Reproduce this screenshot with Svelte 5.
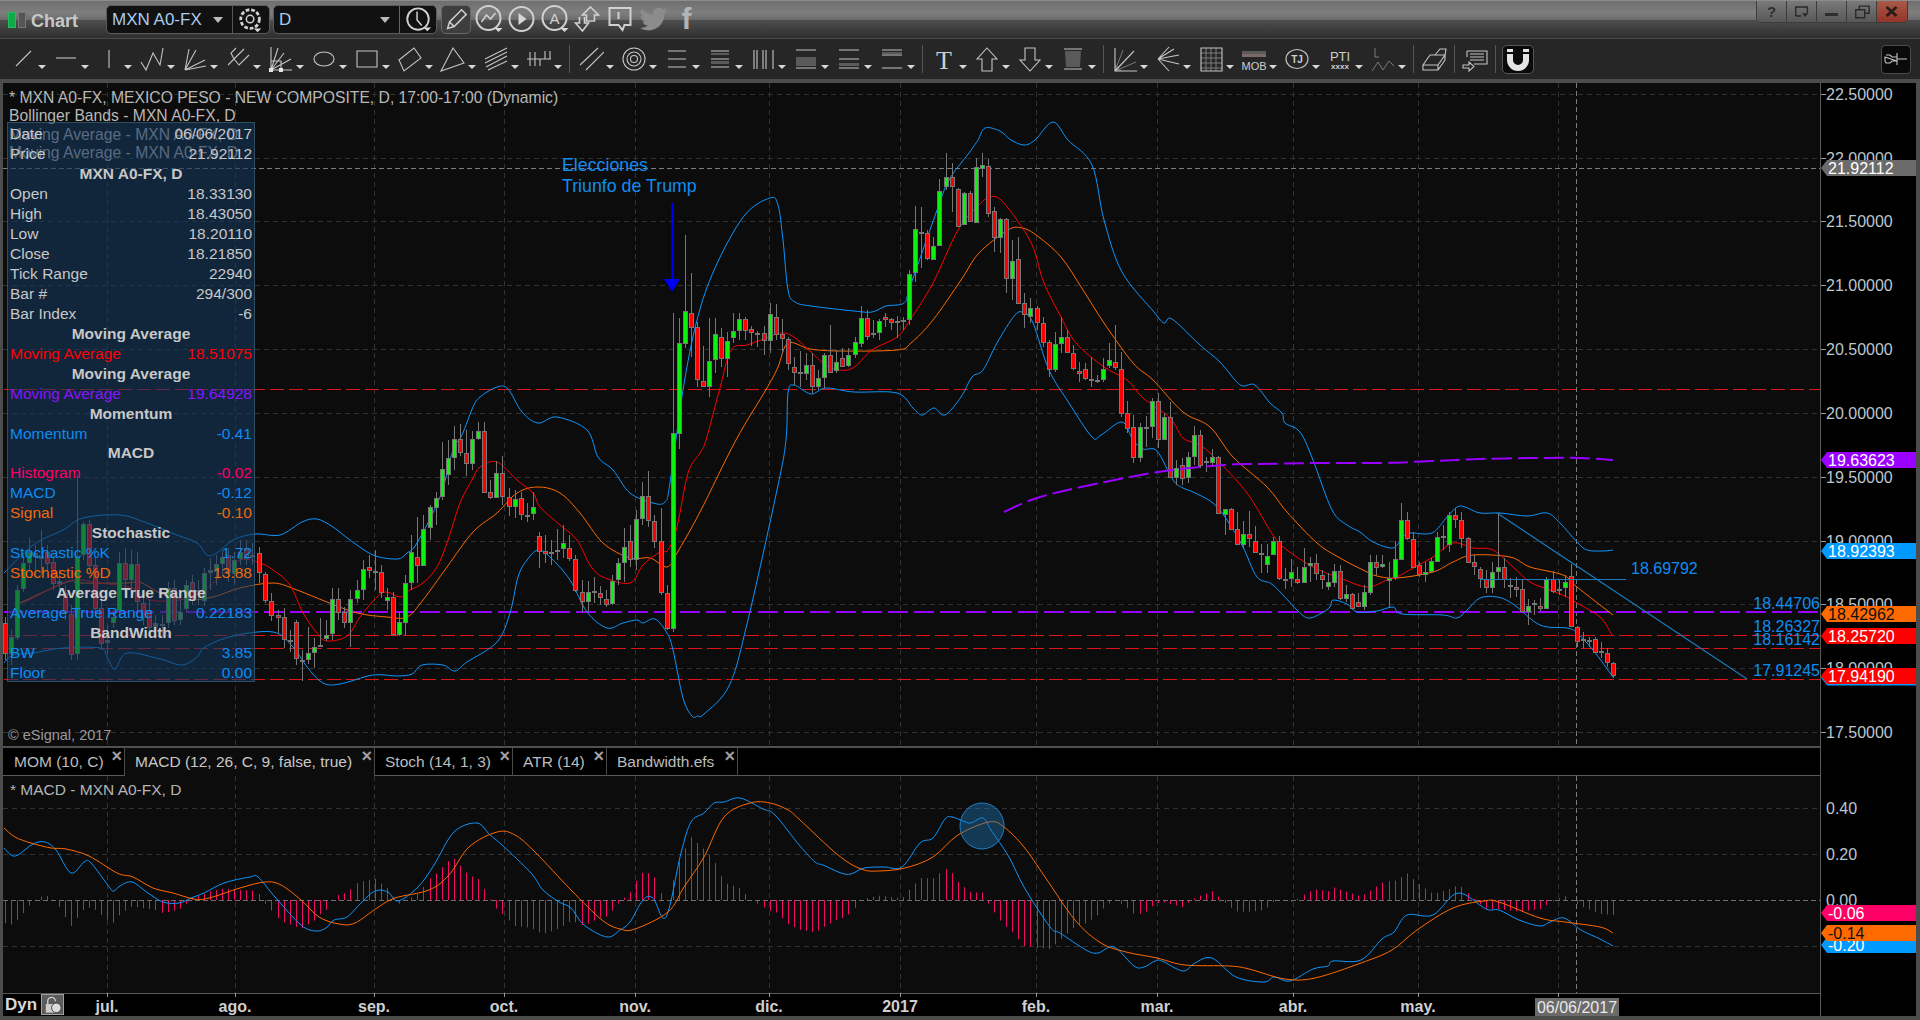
<script>
  // candle data, page pixels: kind + high,top,bottom,low. g = up, r = down, d = doji
  const segments = [
    { x0: 4.7, x1: 252, bars: 'r617,623,653,660 g630,637,653,665 g585,590,637,640 g553,563,588,592 g538,552,562,570 d545,553,556,570 d530,556,558,575 r545,552,563,570 r555,562,583,590 d570,581,583,595 r585,593,612,620 r605,614,654,660 g475,557,653,660 g522,524,554,560 r520,524,565,570 r558,565,608,612 r600,608,643,650 d625,640,642,654 g610,617,622,628 g552,563,610,615 r548,563,579,590 g550,564,579,590 r552,564,601,610 r595,603,617,625 r600,610,627,632 d615,623,626,635 d615,624,625,636 g582,588,622,628 r580,588,620,625 g600,612,619,625 g580,585,608,612 r575,582,600,605 d580,590,591,605 g568,573,600,606 d558,570,572,590 g555,564,571,585 g550,557,563,575 r548,555,572,582 g552,560,573,585 g540,552,558,565 r540,548,558,565 d543,555,556,565' },
    { x0: 259.3, x1: 672.7, bars: 'r547,553,572,583 r572,574,600,603 r593,601,615,621 r610,615,617,633 r608,617,639,648 d630,640,641,652 r620,622,658,665 d650,660,661,681 g627,653,659,664 g638,647,652,668 d618,645,646,647 g620,635,638,641 g588,599,633,640 r588,599,612,620 r607,612,622,628 g590,599,622,647 g580,590,598,603 g560,569,589,600 r555,567,570,578 d550,571,572,590 r565,572,592,598 g588,597,600,610 r592,597,634,635 g612,622,634,636 g575,583,622,635 g535,552,582,590 r517,557,565,583 g515,529,565,565 g505,507,527,540 g492,498,507,525 g442,469,496,500 g440,458,474,485 g426,439,457,470 r424,439,452,456 r430,453,463,476 g431,439,463,470 g422,431,438,440 r422,431,492,493 r480,492,497,499 g461,473,497,498 r456,473,496,505 r488,497,506,516 g490,499,506,518 r492,498,514,520 d503,515,516,522 g492,507,513,520 r532,536,551,568 r535,551,553,563 d540,552,553,565 d529,550,551,560 g525,543,548,558 r535,548,558,561 r555,559,590,592 r580,592,601,612 g581,592,601,612 d577,591,592,603 r586,593,597,605 r590,599,604,607 g575,581,603,605 g558,563,579,585 g528,547,562,582 r525,541,559,567 g510,519,559,570 g482,496,518,525 r471,496,520,527 r515,521,541,548 r508,541,592,595 r585,593,628,630 g313,433,628,632' },
    { x0: 678.6, x1: 1115.4, bars: 'g318,343,433,449 g235,311,343,348 r273,313,327,357 r322,327,379,387 r346,381,386,387 g318,361,386,397 g318,334,359,373 r328,337,358,367 g332,341,358,377 g313,331,337,343 g313,319,330,340 r317,319,330,340 r326,329,332,346 d331,333,334,347 r326,333,340,355 g303,314,340,353 r304,317,334,340 r319,334,338,353 r337,339,363,370 r357,367,372,385 d351,372,373,387 g353,365,373,380 r353,365,386,393 g370,378,386,390 g353,355,377,388 r325,355,372,373 g350,362,370,373 r348,358,366,367 g348,355,365,367 g337,342,354,358 g306,318,343,347 r310,318,336,340 d320,333,334,338 g319,321,332,340 r313,317,319,327 r318,319,322,330 d316,321,322,338 d317,320,321,330 g270,274,319,325 g206,229,272,282 d207,232,233,268 r230,233,258,260 g237,246,259,260 g179,191,245,246 g153,177,186,190 r163,177,186,212 r188,189,226,227 g192,193,224,225 r191,193,221,222 g158,167,222,223 g153,165,168,177 r159,166,213,217 r207,211,237,252 g218,219,237,253 r218,219,278,293 g240,261,278,300 r237,259,303,303 r293,303,314,328 g298,308,316,323 r306,308,322,330 r317,323,342,347 r340,342,369,377 g332,344,369,372 g317,337,343,353 r330,337,352,353 r345,353,368,370 r362,371,373,382 r363,369,378,380 d357,379,380,387 d375,380,381,383 g358,369,379,382 g343,360,365,368 r325,362,367,370' },
    { x0: 1121.3, x1: 1613.3, bars: 'r352,369,413,417 r401,413,428,433 r415,427,457,463 g423,427,457,462 d416,427,428,447 g398,401,426,438 r393,401,439,448 g413,417,439,440 r402,417,477,478 g460,468,477,485 r458,465,478,485 g452,457,477,483 g426,435,456,465 r430,435,465,468 d457,461,462,472 g449,457,462,467 r456,457,513,514 g509,509,514,535 r508,509,529,530 r512,529,544,545 g521,534,544,548 r511,534,538,547 r526,541,552,553 d544,553,554,573 g544,556,564,573 g537,541,554,555 r536,541,578,580 d568,579,580,589 g559,572,578,587 r567,579,582,584 g548,567,582,583 g557,563,565,582 r554,563,573,580 r570,575,579,589 g573,582,586,590 g564,571,582,587 r565,571,598,600 g585,594,598,602 r593,594,608,608 r593,602,606,607 g585,592,606,610 g555,562,592,595 r555,562,567,575 g555,564,566,568 g562,578,580,608 g541,559,577,580 g503,520,559,560 r512,520,538,540 r532,539,567,568 r562,565,574,577 g562,572,574,582 g558,561,571,572 g532,537,561,562 d525,536,537,550 g512,515,544,552 r508,515,519,528 r512,520,538,548 r537,538,562,563 r555,562,566,575 r567,569,578,588 r570,579,587,593 g562,572,587,593 g513,567,571,580 r558,567,579,588 d578,585,586,598 r577,587,589,597 r580,589,611,612 g599,606,611,625 d600,603,604,615 r598,606,608,611 g577,579,608,609 r571,579,591,593 d580,589,590,595 g575,582,587,597 r564,576,626,627 r626,627,641,647 d632,639,640,648 d637,640,641,647 r637,639,652,653 d642,651,652,658 r648,653,662,667 r662,663,675,678' }
  ];

  const bars = segments.flatMap((s) => {
    const toks = s.bars.split(' ');
    const step = (s.x1 - s.x0) / (toks.length - 1);
    return toks.map((t, i) => {
      const [h, top, bot, low] = t.slice(1).split(',').map(Number);
      return { x: Math.round(s.x0 + step * i), kind: t[0], h, top, bot, low };
    });
  });

  const bbUpper = '4,573 33,545 63,530 83,518 120,515 147,523 177,535 197,543 207,555 217,553 233,540 255,534 280,535 302,522 317,519 333,527 350,540 373,555 397,559 407,553 417,543 440,497 453,450 462,435 473,407 480,397 497,387 508,389 522,412 538,423 557,417 587,430 598,457 613,470 630,493 653,503 665,502 670,483 683,390 697,320 715,268 744,216 770,198 778,205 783,240 788,290 795,302 811,306 854,311 872,312 886,306 904,303 910,287 936,213 949,180 969,153 978,140 985,128 1000,131 1011,140 1024,145 1035,140 1053,122 1068,140 1092,165 1104,220 1122,272 1154,312 1164,323 1172,319 1200,345 1220,362 1235,380 1243,386 1255,385 1270,403 1282,413 1285,423 1300,432 1313,460 1332,510 1347,525 1360,532 1373,542 1393,548 1402,538 1410,533 1432,533 1447,517 1457,507 1465,507 1480,513 1500,513 1527,516 1547,513 1560,523 1577,542 1587,550 1603,551 1613,550';
  const bbLower = '4,663 13,655 33,653 63,648 100,648 107,657 115,669 127,653 160,659 182,665 197,657 205,647 233,636 273,632 293,647 307,667 323,683 340,684 373,675 397,676 412,674 422,665 443,665 455,671 467,662 497,642 510,613 518,577 527,560 538,550 550,557 570,580 587,612 607,628 623,623 637,620 643,623 655,619 667,633 673,650 683,698 692,716 698,716 704,714 729,686 747,624 777,490 786,440 788,393 794,385 811,394 826,388 854,392 897,393 913,408 922,415 934,408 945,415 961,397 972,377 983,370 997,343 1015,315 1024,313 1033,323 1049,370 1069,403 1092,437 1101,435 1122,422 1133,440 1143,449 1157,451 1173,480 1183,488 1193,492 1213,503 1227,520 1243,547 1257,577 1273,585 1297,610 1308,618 1320,614 1330,607 1333,600 1347,604 1357,612 1377,611 1393,607 1402,614 1443,615 1457,618 1467,610 1480,598 1497,597 1513,604 1540,625 1567,628 1577,633 1593,650 1613,677';
  const maRed = '23,603 63,583 80,580 100,583 133,588 150,600 180,600 200,593 217,580 240,560 260,563 273,570 290,585 303,613 317,633 327,641 347,636 360,617 377,597 387,592 400,597 410,590 423,583 437,567 448,540 460,503 472,480 480,467 497,462 517,480 533,493 540,507 560,525 577,540 590,565 603,577 630,583 643,565 660,552 668,550 677,527 688,473 700,453 706,440 720,388 731,350 747,345 761,340 781,333 794,337 811,352 829,367 851,369 872,350 897,337 910,320 933,283 958,230 979,205 990,197 1001,200 1019,223 1033,247 1044,283 1061,317 1076,343 1104,367 1127,380 1143,398 1170,418 1183,438 1200,445 1217,460 1247,493 1273,535 1287,550 1313,567 1340,578 1367,587 1387,580 1397,577 1413,568 1433,557 1453,543 1473,548 1493,550 1513,567 1530,582 1550,590 1567,597 1577,603 1600,617 1612,635';
  const maOrange = '20,603 67,582 80,583 127,583 140,582 160,593 187,600 213,597 240,588 273,583 297,590 327,602 357,613 387,617 407,617 423,600 447,567 473,532 497,513 517,493 538,487 560,493 580,513 603,543 630,558 650,558 667,567 677,553 700,512 736,440 767,388 778,367 788,343 810,349 840,351 897,350 911,343 933,320 961,280 979,253 1008,230 1022,228 1036,235 1061,257 1083,290 1104,323 1133,363 1153,380 1183,412 1210,427 1233,457 1267,487 1287,512 1317,543 1340,558 1363,570 1377,576 1397,578 1433,572 1453,562 1473,555 1510,557 1530,567 1563,575 1577,587 1613,615';
  const maPurple = '1004,512 1040,497 1105,482 1165,471 1223,465 1260,464 1317,463 1380,463 1433,461 1480,459 1533,458 1580,458 1613,460';

  const macd = '4,848 11,855 18,855 33,844 45,842 56,850 71,873 84,862 91,863 110,888 114,891 120,886 132,882 148,893 163,902 179,903 191,898 204,893 224,883 250,877 258,877 275,897 301,925 316,931 326,928 334,920 347,917 362,902 375,891 388,892 398,901 418,887 434,865 454,832 477,823 490,835 502,845 531,873 543,890 559,902 571,908 584,925 607,937 620,930 630,922 643,900 653,898 666,917 681,853 691,822 704,813 714,803 724,802 740,798 763,809 775,815 800,846 815,862 823,865 841,873 851,874 864,868 884,867 902,867 920,843 933,838 945,819 952,817 963,821 971,823 983,818 991,830 1009,857 1024,887 1050,927 1060,933 1086,950 1098,953 1114,947 1134,966 1144,967 1155,961 1162,961 1183,971 1195,963 1212,958 1236,977 1264,982 1274,977 1290,981 1313,969 1328,966 1333,961 1361,960 1382,939 1394,932 1407,915 1433,915 1458,893 1486,909 1499,910 1519,920 1540,926 1550,922 1564,918 1581,930 1600,939 1613,946';
  const signal = '4,828 15,837 31,843 51,848 66,849 89,856 117,873 133,877 153,888 173,893 194,899 209,898 240,888 265,882 281,885 301,900 319,917 339,924 355,923 377,908 395,898 429,890 449,875 469,847 497,832 515,835 536,853 571,890 602,920 620,929 635,929 668,912 684,887 704,857 724,817 750,803 770,803 788,810 800,820 838,855 861,869 879,871 905,868 933,857 958,835 989,822 1004,827 1024,847 1045,877 1075,920 1101,943 1126,952 1157,958 1185,965 1229,966 1249,969 1285,979 1315,978 1361,963 1392,950 1417,930 1453,908 1484,901 1499,902 1540,918 1565,922 1600,927 1613,933';

  const parsePts = (line) => line.split(' ').map((p) => p.split(',').map(Number));

  // catmull-rom through the read-off points, the studies are curves not zigzags
  function smooth(line) {
    const p = parsePts(line);
    let d = `M${p[0][0]} ${p[0][1]}`;
    for (let i = 0; i < p.length - 1; i++) {
      const a = p[i - 1] ?? p[i];
      const b = p[i];
      const c = p[i + 1];
      const e = p[i + 2] ?? c;
      const c1x = b[0] + (c[0] - a[0]) / 6;
      const c1y = b[1] + (c[1] - a[1]) / 6;
      const c2x = c[0] - (e[0] - b[0]) / 6;
      const c2y = c[1] - (e[1] - b[1]) / 6;
      d += `C${c1x.toFixed(1)} ${c1y.toFixed(1)} ${c2x.toFixed(1)} ${c2y.toFixed(1)} ${c[0]} ${c[1]}`;
    }
    return d;
  }

  function yAt(line, x) {
    const pts = parsePts(line);
    for (let i = 1; i < pts.length; i++) {
      if (x <= pts[i][0]) {
        const [x0, y0] = pts[i - 1];
        const [x1, y1] = pts[i];
        return y0 + ((y1 - y0) * (x - x0)) / (x1 - x0);
      }
    }
    return pts[pts.length - 1][1];
  }

  const histogram = bars
    .filter((b) => b.x >= 4)
    .map((b) => ({ x: b.x, y: 900 - (yAt(signal, b.x) - yAt(macd, b.x)) * 1.15 }));

  const gridX = [107, 235, 374, 504, 635, 769, 900, 1036, 1157, 1293, 1418, 1558];
  const priceTicks = [
    ['22.50000', 94], ['22.00000', 158], ['21.50000', 221], ['21.00000', 285], ['20.50000', 349], ['20.00000', 413],
    ['19.50000', 477], ['19.00000', 541], ['18.50000', 604], ['18.00000', 668], ['17.50000', 732]
  ];
  const macdTicks = [['0.40', 808], ['0.20', 854], ['0.00', 900]];

  const mainTags = [
    { t: '21.92112', y: 160, bg: '#6b6b6b', fg: '#fff' },
    { t: '19.63623', y: 452, bg: '#9900ff', fg: '#fff' },
    { t: '18.92393', y: 543, bg: '#0099ff', fg: '#fff' },
    { t: '18.42962', y: 606, bg: '#ff6a00', fg: '#111' },
    { t: '18.25720', y: 628, bg: '#ff0000', fg: '#fff' },
    { t: '', y: 669.5, bg: '#0099ff', fg: '#fff' },
    { t: '17.94190', y: 668, bg: '#ff0000', fg: '#fff' }
  ];
  const lowerTags = [
    { t: '-0.06', y: 905, bg: '#ff0066', fg: '#fff' },
    { t: '-0.20', y: 937, bg: '#0099ff', fg: '#fff' },
    { t: '-0.14', y: 925, bg: '#ff6a00', fg: '#111' }
  ];
  const drawLabels = [
    ['18.44706', 604], ['18.26327', 627], ['18.16142', 640], ['17.91245', 671]
  ];

  const tagShape = (y) => `1821,${y + 8} 1827,${y} 1916,${y} 1916,${y + 16} 1827,${y + 16}`;

  const rows = [
    { l: 'Date', v: '06/06/2017' },
    { l: 'Price', v: '21.92112' },
    { h: 'MXN A0-FX, D' },
    { l: 'Open', v: '18.33130' },
    { l: 'High', v: '18.43050' },
    { l: 'Low', v: '18.20110' },
    { l: 'Close', v: '18.21850' },
    { l: 'Tick Range', v: '22940' },
    { l: 'Bar #', v: '294/300' },
    { l: 'Bar Index', v: '-6' },
    { h: 'Moving Average' },
    { l: 'Moving Average', v: '18.51075', c: 'red' },
    { h: 'Moving Average' },
    { l: 'Moving Average', v: '19.64928', c: 'purple' },
    { h: 'Momentum' },
    { l: 'Momentum', v: '-0.41', c: 'blue' },
    { h: 'MACD' },
    { l: 'Histogram', v: '-0.02', c: 'pink' },
    { l: 'MACD', v: '-0.12', c: 'blue' },
    { l: 'Signal', v: '-0.10', c: 'orange' },
    { h: 'Stochastic' },
    { l: 'Stochastic %K', v: '1.72', c: 'blue' },
    { l: 'Stochastic %D', v: '13.88', c: 'orange' },
    { h: 'Average True Range' },
    { l: 'Average True Range', v: '0.22183', c: 'blue' },
    { h: 'BandWidth' },
    { l: 'BW', v: '3.85', c: 'blue' },
    { l: 'Floor', v: '0.00', c: 'blue' }
  ];

  const tabs = [
    { t: 'MOM (10, C)', w: 121 },
    { t: 'MACD (12, 26, C, 9, false, true)', w: 250, active: true },
    { t: 'Stoch (14, 1, 3)', w: 138 },
    { t: 'ATR (14)', w: 94 },
    { t: 'Bandwidth.efs', w: 131 }
  ];

  const months = [
    ['jul.', 107], ['ago.', 235], ['sep.', 374], ['oct.', 504], ['nov.', 635], ['dic.', 769],
    ['2017', 900], ['feb.', 1036], ['mar.', 1157], ['abr.', 1293], ['may.', 1418]
  ];

  // toolbar: s = stroke path, m = dim filled path, d = dim stroke, t = svg text
  const group1 = [
    { s: 'M6 22L21 7' },
    { s: 'M3 14H23' },
    { s: 'M13 6V24' },
    { s: 'M2 18L7 26L14 9L21 21L24 4' },
    { s: 'M3 26L7 5M3 26L14 6M3 26L23 16M3 26L24 22' },
    { s: 'M3 21L9 15L19 5M9 15L6 9L11 4M9 15L14 21L24 11' },
    { s: 'M3 26V3M3 26L10 4M3 26L16 9M3 26L23 15M3 26H24M3 17H13L13 26', k: 'M1 24h4v4h-4zM11 24h4v4h-4z' },
    { s: 'M23 15a10 7 0 1 1-20 0a10 7 0 1 1 20 0Z' },
    { s: 'M3 7H23V23H3Z' },
    { s: 'M2 16L17 4L24 14L7 27Z' },
    { s: 'M13 4L1 27L24 19Z' },
    { s: 'M2 15L24 4M2 19L24 8M3 23L24 12M5 26L24 17' },
    { s: 'M1 15H25M4 8V22M9 8V22M14 15V22M19 7V15M24 7V15' }
  ];
  const group2 = [
    { s: 'M2 21L20 4M8 26L26 8' },
    { s: 'M24 15a11 11 0 1 1-22 0a11 11 0 1 1 22 0ZM20 15a7 7 0 1 1-14 0a7 7 0 1 1 14 0ZM16.500 15a3.500 3.500 0 1 1-7 0a3.500 3.500 0 1 1 7 0Z' },
    { s: 'M4 7H22M4 15H22M4 23H22' },
    { s: 'M4 7H22M4 15H22M4 23H22', m: 'M4 9h18v2h-18zM4 17h18v3h-18z' },
    { s: 'M4 6V25M7 6V25M13 6V25M16 6V25M23 6V25' },
    { s: 'M3 6H23M3 24H23', m: 'M3 13h20v9h-20z' },
    { s: 'M3 6H23M3 24H23M3 15H23', m: 'M3 19h20v3h-20z' },
    { s: 'M3 6H23M3 24H23M3 11H23', m: 'M3 8h20v2h-20z' }
  ];
  const group3 = [
    { t: [{ x: 13, y: 25, size: 26, str: 'T', cls: 'serif' }] },
    { s: 'M13 4L23 15H18V27H8V15H3Z' },
    { s: 'M8 4H18V16H23L13 27L3 16H8Z' },
    { s: 'M4 5H22M4 25H22', m: 'M5 7h16l-1 16h-14z' }
  ];
  const group4 = [
    { s: 'M3 4V27H25M3 27L22 7', d: 'M3 27L11 6M3 27L24 18', m: 'M3 20l7 7h-7z' },
    { s: 'M3 15L19 5M3 15L24 11M3 15L24 20M3 15L14 27M3 15L14 3' },
    { s: 'M3 4H24V27H3Z', d: 'M3 9H24M3 14H24M3 19H24M3 24H24M8 4V27M13 4V27M18 4V27' },
    { m: 'M1 7h24v3h-24z', r: 'M1 10h24v3h-24z', t: [{ x: 13, y: 26, size: 11, str: 'MOB' }] },
    { s: 'M24 15a11 9.500 0 1 1-22 0a11 9.500 0 1 1 22 0Z', t: [{ x: 13, y: 19, size: 10, str: 'TJ', cls: 'bold' }] },
    { t: [{ x: 13, y: 17, size: 13, str: 'PTI' }, { x: 13, y: 25, size: 8, str: 'xxxx', cls: 'bold' }] },
    { d: 'M5 4V13H9M2 27L8 18L13 26L19 17L24 22' }
  ];
</script>

<div class="window">
  <header class="titlebar">
    <span class="logo"><i class="on"></i><i></i></span>
    <span class="title">Chart</span>

    <div class="combo sym">
      <span class="combo-text">MXN A0-FX</span>
      <span class="combo-caret"></span>
      <span class="combo-btn">
        <svg viewBox="0 0 30 30" width="28" height="28">
          <circle cx="14" cy="14" r="10" class="ic dashed" />
          <circle cx="14" cy="14" r="4" class="ic" />
          <path d="M18 24h8l-4 4z" class="fl" />
        </svg>
      </span>
    </div>
    <div class="combo int">
      <span class="combo-text">D</span>
      <span class="combo-caret"></span>
      <span class="combo-btn">
        <svg viewBox="0 0 30 30" width="30" height="28">
          <circle cx="15" cy="14" r="11.500" class="ic wide" />
          <path d="M14 6V15L19 21" class="ic" />
          <path d="M21 23h8l-4 4z" class="fl" />
        </svg>
      </span>
    </div>

    <button class="pencil" aria-label="draw">
      <svg viewBox="0 0 30 30" width="28" height="28">
        <path d="M6 24L8 17L21 4L26 9L13 22ZM8 17L13 22" class="ic" />
      </svg>
    </button>

    <div class="title-icons">
      <svg viewBox="0 0 30 30" width="33" height="30">
        <circle cx="15" cy="14" r="12" class="ic wide" />
        <path d="M8 18L13 11L17 15L22 9" class="ic" />
        <path d="M21 24h8l-4 4z" class="fl" />
      </svg>
      <svg viewBox="0 0 30 30" width="33" height="30">
        <circle cx="15" cy="15" r="12" class="ic wide" />
        <path d="M12 9V21L20 15Z" class="fl" />
      </svg>
      <svg viewBox="0 0 30 30" width="33" height="30">
        <circle cx="15" cy="14" r="12" class="ic wide" />
        <text x="15" y="20" class="a-glyph">A</text>
        <path d="M21 24h8l-4 4z" class="fl" />
      </svg>
      <svg viewBox="0 0 30 30" width="33" height="30">
        <path d="M18 3L26 11H22V17H14V11H10ZM12 13V19H16L10 27L3 19H7V13" class="ic" />
      </svg>
      <svg viewBox="0 0 30 30" width="33" height="30">
        <path d="M4 4H25V21H19L17 26L13 21H4ZM13 8V15" class="ic wide" />
      </svg>
      <svg viewBox="0 0 24 24" width="33" height="28">
        <path class="dimfl" d="M23.950 4.570a10 10 0 01-2.820.780 4.960 4.960 0 002.160-2.720c-.950.550-2 .960-3.120 1.190a4.920 4.920 0 00-8.390 4.480C7.690 8.100 4.070 6.130 1.640 3.160a4.820 4.820 0 00-.670 2.480c0 1.710.870 3.210 2.190 4.100a4.900 4.900 0 01-2.230-.620v.060a4.930 4.930 0 003.950 4.830 5 5 0 01-2.210.080 4.940 4.940 0 004.600 3.420A9.870 9.870 0 010 19.540a13.940 13.940 0 007.550 2.210c9.060 0 14-7.500 14-13.980 0-.210 0-.420-.020-.630a9.940 9.940 0 002.460-2.550z" />
      </svg>
      <span class="fb">f</span>
    </div>

    <div class="win-buttons">
      <button aria-label="help"><span class="q">?</span></button>
      <button aria-label="menu">
        <svg viewBox="0 0 20 16" width="18" height="15"><path d="M3 13V3H16V10M9 13H3" class="win-ic" /><path d="M10 10h7l-3.500 4z" class="win-fl" /></svg>
      </button>
      <button aria-label="minimize"><i class="min"></i></button>
      <button aria-label="restore">
        <svg viewBox="0 0 20 16" width="18" height="15"><path d="M3 6H13V15H3ZM7 6V2H18V10H13" class="win-ic" /></svg>
      </button>
      <button class="close" aria-label="close">
        <svg viewBox="0 0 20 16" width="18" height="15"><path d="M4 3L15 13M15 3L4 13" class="win-x" /></svg>
      </button>
    </div>
  </header>

  <nav class="toolbar">
    {#snippet tool(t)}
      <span class="tool">
        <svg viewBox="0 0 26 30" width="26" height="30">
          {#if t.m}<path d={t.m} class="t-dim" />{/if}
          {#if t.r}<path d={t.r} class="t-red" />{/if}
          {#if t.d}<path d={t.d} class="t-faint" />{/if}
          {#if t.s}<path d={t.s} class="t-line" />{/if}
          {#if t.k}<path d={t.k} class="t-solid" />{/if}
          {#each t.t ?? [] as l}
            <text x={l.x} y={l.y} font-size={l.size} class="t-text {l.cls ?? ''}">{l.str}</text>
          {/each}
        </svg>
        <i class="caret"></i>
      </span>
    {/snippet}

    {#each group1 as t}{@render tool(t)}{/each}
    <i class="sep"></i>
    {#each group2 as t}{@render tool(t)}{/each}
    <i class="sep"></i>
    {#each group3 as t}{@render tool(t)}{/each}
    <i class="sep"></i>
    {#each group4 as t}{@render tool(t)}{/each}
    <i class="sep"></i>
    <span class="plain">
      <svg viewBox="0 0 26 30" width="26" height="30">
        <path d="M2 21L9 11H24L17 21ZM2 21V26H17V21M17 26L24 16V11M14 11L19 5H25L24 11" class="t-line" />
      </svg>
    </span>
    <i class="sep"></i>
    <span class="plain">
      <svg viewBox="0 0 26 30" width="26" height="30">
        <path d="M5 7H25V20H12M5 7V13" class="t-line" />
        <path d="M8 10H22M8 13H22M8 16H22" class="t-line" />
        <path d="M1 21H7V18L12 22.500L7 27V24H1Z" class="t-line" />
      </svg>
    </span>
    <i class="sep"></i>
    <span class="magnet">
      <svg viewBox="0 0 30 28" width="30" height="28">
        <path d="M7 9V15a8 8 0 0 0 16 0V9" class="mag" />
        <path d="M4 4h6v3h-6zM20 4h6v3h-6z" class="t-solid" />
      </svg>
    </span>
    <span class="pin">
      <svg viewBox="0 0 28 20" width="28" height="20">
        <path d="M4 6H8L10 8H15V4M15 4V16M15 12H10L8 14H4L3 12V8ZM15 10H25" class="t-line" />
      </svg>
    </span>
  </nav>

  <div class="panes">
    <section class="pane main">
      <svg class="plot" viewBox="3 83 1913 663" width="1913" height="663">
        <rect x="3" y="83" width="1817" height="663" class="plot-bg" />
        {#each gridX as x}<line x1={x + 0.5} x2={x + 0.5} y1="83" y2="746" class="grid" />{/each}
        {#each priceTicks as [, y]}<line x1="3" x2="1827" y1={y + 0.5} y2={y + 0.5} class="grid" />{/each}
        <line x1="3" x2="1820" y1="168.500" y2="168.500" class="cross" />
        <line x1="1576.500" x2="1576.500" y1="83" y2="746" class="cross" />

        <line x1="4" x2="1820" y1="389.500" y2="389.500" class="level" />
        <line x1="4" x2="1820" y1="635.500" y2="635.500" class="level" />
        <line x1="4" x2="1820" y1="648.500" y2="648.500" class="level" />
        <line x1="4" x2="1820" y1="679.500" y2="679.500" class="level" />
        <line x1="4" x2="1818" y1="612" y2="612" class="dash-purple" />

        <path d={smooth(bbUpper)} class="ln bb" />
        <path d={smooth(bbLower)} class="ln bb" />
        <path d={smooth(maOrange)} class="ln orange" />
        <path d={smooth(maRed)} class="ln red" />

        {#each bars as b}
          <line x1={b.x + 0.5} x2={b.x + 0.5} y1={b.h} y2={b.low} class="wick" />
          <rect x={b.x - 1.5} y={b.top + 0.5} width="4" height={b.bot - b.top} class="body {b.kind}" />
        {/each}

        <path d={smooth(maPurple)} class="dash-purple" />
        <line x1="1497" y1="513" x2="1747" y2="679" class="draw" />
        <line x1="1480" y1="579.500" x2="1626" y2="579.500" class="draw" />

        <line x1="672.500" x2="672.500" y1="203" y2="281" class="arrow" />
        <path d="M664 279h16l-8 13z" class="arrow-head" />

        <text x="562" y="171" class="note big">Elecciones</text>
        <text x="562" y="192" class="note big">Triunfo de Trump</text>
        <text x="1631" y="574" class="note">18.69792</text>
        {#each drawLabels as [t, y]}
          <text x="1820" y={y + 5} class="note end">{t}</text>
        {/each}

        <rect x="1821" y="83" width="95" height="663" class="axis-bg" />
        <line x1="1820.500" x2="1820.500" y1="83" y2="746" class="axis-line" />
        {#each priceTicks as [t, y]}
          <line x1="1821" x2="1826" y1={y + 0.5} y2={y + 0.5} class="tick" />
          <text x="1826" y={y + 6} class="axis-text">{t}</text>
        {/each}
        {#each mainTags as tag}
          <polygon points={tagShape(tag.y)} fill={tag.bg} />
          <text x="1828" y={tag.y + 14} class="tag-text" fill={tag.fg}>{tag.t}</text>
        {/each}
      </svg>

      <div class="legend">
        <div>* MXN A0-FX, MEXICO PESO - NEW COMPOSITE, D, 17:00-17:00 (Dynamic)</div>
        <div>Bollinger Bands - MXN A0-FX, D</div>
        <div>Moving Average - MXN A0-FX, D</div>
        <div>Moving Average - MXN A0-FX, D</div>
      </div>

      <aside class="info">
        {#each rows as r}
          {#if r.h}
            <div class="row head">{r.h}</div>
          {:else}
            <div class="row {r.c ?? ''}"><span>{r.l}</span><span>{r.v}</span></div>
          {/if}
        {/each}
      </aside>

      <div class="copy">© eSignal, 2017</div>
    </section>

    <div class="tabstrip">
      {#each tabs as tab}
        <div class="tab" class:active={tab.active} style="width: {tab.w}px">
          <span>{tab.t}</span>
          <b class="tab-x">×</b>
        </div>
      {/each}
    </div>

    <section class="pane lower">
      <svg class="plot" viewBox="3 776 1913 217" width="1913" height="217">
        <rect x="3" y="776" width="1817" height="217" class="plot-bg" />
        {#each gridX as x}<line x1={x + 0.5} x2={x + 0.5} y1="776" y2="993" class="grid" />{/each}
        <line x1="3" x2="1827" y1="808.500" y2="808.500" class="grid" />
        <line x1="3" x2="1827" y1="854.500" y2="854.500" class="grid" />
        <line x1="3" x2="1827" y1="946.500" y2="946.500" class="grid" />
        <line x1="1576.500" x2="1576.500" y1="776" y2="993" class="cross" />

        {#each histogram as h}
          <line x1={h.x + 0.5} x2={h.x + 0.5} y1="900" y2={h.y} class="hist" />
        {/each}
        <line x1="3" x2="1827" y1="900.500" y2="900.500" class="zero" />

        <path d={smooth(macd)} class="ln bb" />
        <path d={smooth(signal)} class="ln orange" />
        <ellipse cx="982" cy="826" rx="22" ry="23" class="mark" />

        <text x="10" y="795" class="pane-title">* MACD - MXN A0-FX, D</text>

        <rect x="1821" y="776" width="95" height="217" class="axis-bg" />
        <line x1="1820.500" x2="1820.500" y1="776" y2="993" class="axis-line" />
        {#each macdTicks as [t, y]}
          <text x="1826" y={y + 6} class="axis-text">{t}</text>
        {/each}
        {#each lowerTags as tag}
          <polygon points={tagShape(tag.y)} fill={tag.bg} />
          <text x="1828" y={tag.y + 14} class="tag-text" fill={tag.fg}>{tag.t}</text>
        {/each}
      </svg>
    </section>

    <footer class="timeaxis">
      <svg class="plot" viewBox="3 993 1913 23" width="1913" height="23">
        <line x1="3" x2="1820" y1="993.500" y2="993.500" class="axis-line" />
        <line x1="1820.500" x2="1820.500" y1="993" y2="1016" class="axis-line" />
        {#each gridX as x}<line x1={x + 0.5} x2={x + 0.5} y1="993" y2="997" class="tick" />{/each}
        {#each months as [t, x]}
          <text x={x} y="1012" class="month">{t}</text>
        {/each}
        <rect x="1535" y="998" width="84" height="18" class="date-bg" />
        <text x="1577" y="1013" class="date">06/06/2017</text>
      </svg>
      <div class="dyn">
        <span>Dyn</span>
        <span class="lock">
          <svg viewBox="0 0 22 20" width="22" height="20">
            <path d="M6 9V6a4 4 0 0 1 8 0" class="lock-ic" />
            <path d="M4 9h10v9h-10z" class="lock-fl" />
            <circle cx="15" cy="13" r="5" class="lock-clock" />
          </svg>
        </span>
      </div>
    </footer>
  </div>
</div>

<style>
  :global(body) {
    margin: 0;
    background: #000;
    overflow: hidden;
  }

  .window {
    width: 1920px;
    height: 1020px;
    display: flex;
    flex-direction: column;
    background: #4c4c4c;
    font-family: 'Liberation Sans', Arial, sans-serif;
    overflow: hidden;
  }

  /* title bar */
  .titlebar {
    height: 38px;
    flex: none;
    display: flex;
    align-items: flex-start;
    box-sizing: border-box;
    padding-left: 8px;
    border-top: 1px solid #8c8c8c;
    background: linear-gradient(#6f6f6f 0, #7e7e7e 32%, #6c6c6c 50%, #4e4e4e 51%, #2f2f2f 100%);
  }

  .logo {
    display: flex;
    gap: 2px;
    margin-top: 11px;
  }

  .logo i {
    width: 6px;
    height: 14px;
    background: #555;
    border: 1px solid #777;
  }

  .logo i.on {
    background: #12a84a;
    border-color: #18c458;
  }

  .title {
    margin: 10px 0 0 5px;
    width: 75px;
    color: #c8c8c8;
    font-size: 18px;
    font-weight: 700;
    line-height: 20px;
  }

  .combo {
    height: 29px;
    margin-top: 4px;
    display: flex;
    align-items: center;
    box-sizing: border-box;
    background: #111;
    border: 1px solid #5a5a5a;
    border-radius: 5px;
  }

  .sym {
    width: 164px;
  }

  .int {
    width: 164px;
    margin-left: 3px;
  }

  .combo-text {
    flex: 1;
    padding-left: 5px;
    color: #a9cbea;
    font-size: 17px;
  }

  .combo-caret {
    width: 0;
    height: 0;
    margin-right: 9px;
    border: 5px solid transparent;
    border-top: 6px solid #bbb;
    border-bottom: 0;
  }

  .combo-btn {
    height: 100%;
    width: 36px;
    display: flex;
    align-items: center;
    justify-content: center;
    border-left: 1px solid #555;
  }

  .int .combo-btn {
    border-left-color: #666;
  }

  .pencil {
    width: 30px;
    height: 29px;
    margin: 4px 0 0 4px;
    padding: 0;
    display: flex;
    align-items: center;
    justify-content: center;
    background: #3e3e3e;
    border: 1px solid #666;
    border-radius: 5px;
  }

  .title-icons {
    display: flex;
    align-items: center;
    height: 30px;
    margin: 3px 0 0 1px;
  }

  .ic {
    fill: none;
    stroke: #d0d0d0;
    stroke-width: 1.6;
  }

  .ic.wide {
    stroke-width: 2;
  }

  .ic.dashed {
    stroke-width: 3;
    stroke-dasharray: 4 2;
  }

  .fl {
    fill: #d8d8d8;
  }

  .dimfl {
    fill: #8c8c8c;
  }

  .a-glyph {
    fill: #d0d0d0;
    font-size: 15px;
    text-anchor: middle;
  }

  .fb {
    width: 33px;
    text-align: center;
    color: #b4b4b4;
    font-size: 30px;
    font-weight: 700;
    line-height: 30px;
  }

  .win-buttons {
    margin-left: auto;
    margin-right: 12px;
    display: flex;
    height: 21px;
    border: 1px solid #3c3c3c;
    border-top: 0;
    border-radius: 0 0 5px 5px;
    overflow: hidden;
  }

  .win-buttons button {
    width: 30px;
    padding: 0;
    display: flex;
    align-items: center;
    justify-content: center;
    border: 0;
    border-right: 1px solid #3c3c3c;
    background: linear-gradient(#7a7a7a, #585858);
  }

  .win-buttons .close {
    border-right: 0;
    background: linear-gradient(#a85a48, #95342a);
  }

  .q {
    color: #2e2e2e;
    font-size: 15px;
    font-weight: 700;
  }

  .min {
    width: 13px;
    height: 3px;
    margin-top: 6px;
    background: #2e2e2e;
  }

  .win-ic {
    fill: none;
    stroke: #2a2a2a;
    stroke-width: 1.6;
  }

  .win-fl {
    fill: #2a2a2a;
  }

  .win-x {
    stroke: #2a1a18;
    stroke-width: 3;
  }

  /* drawing tools */
  .toolbar {
    height: 41px;
    flex: none;
    display: flex;
    align-items: center;
    box-sizing: border-box;
    padding-left: 6px;
    background: #262626;
    border-top: 1px solid #4c4c4c;
  }

  .tool {
    width: 43px;
    height: 30px;
    flex: none;
    display: flex;
    box-sizing: border-box;
    padding-left: 4px;
  }

  .caret {
    width: 0;
    height: 0;
    margin: 21px 0 0 2px;
    border: 4px solid transparent;
    border-top: 4px solid #d8d8d8;
    border-bottom: 0;
  }

  .sep {
    width: 1px;
    height: 28px;
    flex: none;
    margin: 0 4px;
    background: #555;
  }

  .plain {
    width: 32px;
    height: 30px;
    flex: none;
    display: flex;
    justify-content: center;
  }

  .t-line {
    fill: none;
    stroke: #c4c4c4;
    stroke-width: 1.1;
  }

  .t-faint {
    fill: none;
    stroke: #7a7a7a;
    stroke-width: 1;
  }

  .t-dim {
    fill: #5a5a5a;
  }

  .t-red {
    fill: #7b6a6a;
  }

  .t-solid {
    fill: #e4e4e4;
  }

  .t-text {
    fill: #cfcfcf;
    text-anchor: middle;
  }

  .t-text.serif {
    font-family: 'Liberation Serif', serif;
  }

  .t-text.bold {
    font-weight: 700;
  }

  .magnet {
    width: 32px;
    height: 29px;
    margin-left: 2px;
    flex: none;
    display: flex;
    align-items: center;
    justify-content: center;
    box-sizing: border-box;
    background: #0a0a0a;
    border: 1px solid #555;
    border-radius: 5px;
  }

  .mag {
    fill: none;
    stroke: #e4e4e4;
    stroke-width: 6;
  }

  .pin {
    width: 30px;
    height: 29px;
    margin: 0 9px 0 auto;
    flex: none;
    display: flex;
    align-items: center;
    justify-content: center;
    box-sizing: border-box;
    background: #0a0a0a;
    border: 1px solid #4a4a4a;
    border-radius: 4px;
  }

  /* panes */
  .panes {
    flex: 1;
    margin: 4px 4px 4px 3px;
    display: flex;
    flex-direction: column;
    background: #000;
    min-height: 0;
  }

  .pane {
    position: relative;
    flex: none;
  }

  .main {
    height: 663px;
  }

  .lower {
    height: 217px;
  }

  .plot {
    display: block;
  }

  .plot-bg {
    fill: #0c0c0c;
  }

  .axis-bg {
    fill: #000;
  }

  .axis-line {
    stroke: #5a5a5a;
    stroke-width: 1;
  }

  .grid {
    stroke: #323232;
    stroke-width: 1;
    stroke-dasharray: 5 4;
  }

  .cross {
    stroke: #7c7c7c;
    stroke-width: 1;
    stroke-dasharray: 5 3;
  }

  .zero {
    stroke: #6e6e6e;
    stroke-width: 1;
    stroke-dasharray: 5 3;
  }

  .level {
    stroke: #e01414;
    stroke-width: 1;
    stroke-dasharray: 14 5;
  }

  .dash-purple {
    fill: none;
    stroke: #9900ff;
    stroke-width: 2;
    stroke-dasharray: 20 6;
  }

  .ln {
    fill: none;
    stroke-width: 1;
    stroke-linejoin: round;
  }

  .bb {
    stroke: #0c96ff;
  }

  .orange {
    stroke: #ff6a00;
  }

  .red {
    stroke: #ff0000;
  }

  .draw {
    stroke: #1c78b8;
    stroke-width: 1.2;
  }

  .wick {
    stroke: #777;
    stroke-width: 1;
  }

  .body {
    stroke: #777;
    stroke-width: 1;
  }

  .body.g {
    fill: #0ef00e;
  }

  .body.r {
    fill: #ff0000;
  }

  .body.d {
    fill: #777;
  }

  .arrow {
    stroke: #0000f0;
    stroke-width: 2;
  }

  .arrow-head {
    fill: #0000f0;
  }

  .note {
    fill: #108cf0;
    font-size: 16px;
  }

  .note.big {
    font-size: 17.8px;
  }

  .note.end {
    text-anchor: end;
  }

  .tick {
    stroke: #999;
    stroke-width: 1;
  }

  .axis-text {
    fill: #bcc6ce;
    font-size: 16px;
  }

  .tag-text {
    font-size: 16px;
  }

  .hist {
    stroke: #ee0a66;
    stroke-width: 1;
  }

  .mark {
    fill: rgba(30, 125, 195, 0.4);
    stroke: #1f80c8;
    stroke-width: 1;
  }

  .pane-title {
    fill: #b4b4b4;
    font-size: 15.5px;
  }

  .legend {
    position: absolute;
    left: 6px;
    top: 6px;
    color: #b8b8b8;
    font-size: 15.7px;
    line-height: 18.300px;
    white-space: nowrap;
  }

  .info {
    position: absolute;
    left: 4px;
    top: 39px;
    width: 248px;
    height: 560px;
    box-sizing: border-box;
    padding: 1px 2px 0;
    display: grid;
    grid-auto-rows: 19.98px;
    background: rgba(22, 55, 92, 0.6);
    border: 1px solid rgba(80, 120, 140, 0.5);
    color: #c8c8c8;
    font-size: 15.5px;
  }

  .row {
    display: flex;
    justify-content: space-between;
    align-items: center;
    white-space: nowrap;
  }

  .row.head {
    justify-content: center;
    font-weight: 700;
  }

  .row.red {
    color: #ff0000;
  }

  .row.purple {
    color: #8a14ff;
  }

  .row.blue {
    color: #0e8cf0;
  }

  .row.pink {
    color: #ff0066;
  }

  .row.orange {
    color: #f06a0a;
  }

  .copy {
    position: absolute;
    left: 5px;
    bottom: 3px;
    color: #999;
    font-size: 14.5px;
  }

  /* study tabs */
  .tabstrip {
    height: 30px;
    flex: none;
    display: flex;
    box-sizing: border-box;
    padding-top: 2px;
    background: #000;
    border-top: 2px solid #505050;
    width: 1818px;
    border-bottom: 1px solid #5a5a5a;
    border-right: 1px solid #5a5a5a;
    padding-left: 1px;
  }

  .tab {
    box-sizing: border-box;
    height: 28px;
    margin-top: -2px;
    display: flex;
    justify-content: space-between;
    padding: 0 2px 0 10px;
    border-right: 1px solid #4a4a4a;
    color: #bcbcbc;
    font-size: 15.5px;
    line-height: 27px;
    white-space: nowrap;
  }

  .tab.active {
    background: #0c0c0c;
    height: 29px;
    color: #c8c8c8;
  }

  .tab-x {
    color: #a0a0a0;
    font-size: 18px;
    font-weight: 700;
    line-height: 16px;
  }

  /* time axis */
  .timeaxis {
    position: relative;
    flex: none;
    height: 23px;
  }

  .month {
    fill: #cfcfcf;
    font-size: 16px;
    font-weight: 700;
    text-anchor: middle;
  }

  .date-bg {
    fill: #6a6a6a;
  }

  .date {
    fill: #e8e8e8;
    font-size: 16px;
    text-anchor: middle;
  }

  .dyn {
    position: absolute;
    left: 2px;
    top: 1px;
    display: flex;
    align-items: center;
    gap: 4px;
    color: #d8d8d8;
    font-size: 17px;
    font-weight: 700;
  }

  .lock {
    width: 23px;
    height: 21px;
    display: flex;
    align-items: center;
    justify-content: center;
    background: #5c5c5c;
    border: 1px solid #a0a0a0;
    box-sizing: border-box;
  }

  .lock-ic {
    fill: none;
    stroke: #ccc;
    stroke-width: 1.5;
  }

  .lock-fl {
    fill: #ccc;
  }

  .lock-clock {
    fill: #ddd;
    stroke: #444;
    stroke-width: 1;
  }
</style>
